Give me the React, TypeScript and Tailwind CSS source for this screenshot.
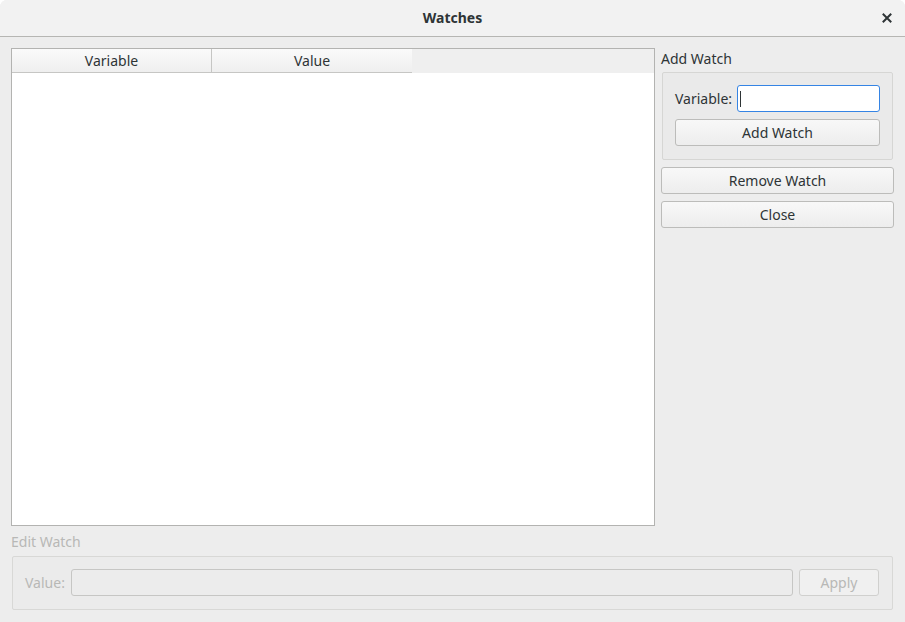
export default function App() {
  return (
    <div className="w-[905px] h-[622px] bg-white font-['Noto_Sans',sans-serif] text-[14px] text-[#2e3436]">
      <div className="w-full h-full flex flex-col rounded-t-[7px] overflow-hidden bg-[#ededed]">
        {/* title bar */}
        <div className="relative h-[37px] shrink-0 flex items-center justify-center bg-[#f2f2f2] border-b border-[#b6b6b3]">
          <span className="font-bold text-[14px] leading-none">Watches</span>
          <button className="absolute right-[12px] top-[12px] w-[12px] h-[12px] flex items-center justify-center">
            <svg width="10" height="10" viewBox="0 0 10 10">
              <path d="M1.5 1.5 L8.5 8.5 M8.5 1.5 L1.5 8.5" stroke="#2e3436" strokeWidth="2" strokeLinecap="square" />
            </svg>
          </button>
        </div>

        <div className="flex-1 flex flex-col px-[11px] pt-[11px] pb-[11px]">
          <div className="flex gap-[6px] h-[478px]">
            {/* table */}
            <div className="flex-1 border border-[#b3b3b1] bg-white flex flex-col">
              <div className="flex h-[24px] bg-[#efefef]">
                <div className="w-[200px] flex items-center justify-center bg-gradient-to-b from-[#fafafa] to-[#efefef] border-r border-b border-[#c6c6c4]">
                  Variable
                </div>
                <div className="w-[200px] flex items-center justify-center bg-gradient-to-b from-[#fafafa] to-[#efefef] border-b border-[#c6c6c4]">
                  Value
                </div>
                <div className="flex-1" />
              </div>
              <div className="flex-1" />
            </div>

            {/* right column */}
            <div className="w-[233px] flex flex-col">
              <div className="h-[21px] leading-[21px]">Add Watch</div>
              <div className="mt-[3px] ml-[1px] mr-[1px] border border-[#d6d6d4] bg-[#eaeaea] rounded-[2px] px-[12px] pt-[12px] pb-[13px] flex flex-col gap-[7px]">
                <div className="flex items-center gap-[5px]">
                  <span>Variable:</span>
                  <div className="flex-1 h-[27px] bg-white border border-[#3584e4] rounded-[3px] flex items-center pl-[2px]">
                    <span className="w-[1px] h-[16px] bg-[#2e3436]" />
                  </div>
                </div>
                <button className="h-[27px] border border-[#bcbcba] rounded-[3px] bg-gradient-to-b from-[#f8f8f8] to-[#ededed]">
                  Add Watch
                </button>
              </div>
              <button className="mt-[7px] h-[27px] border border-[#bcbcba] rounded-[3px] bg-gradient-to-b from-[#f8f8f8] to-[#ededed]">
                Remove Watch
              </button>
              <button className="mt-[7px] h-[27px] border border-[#bcbcba] rounded-[3px] bg-gradient-to-b from-[#f8f8f8] to-[#ededed]">
                Close
              </button>
            </div>
          </div>

          {/* edit watch */}
          <div className="mt-[6px] h-[20px] leading-[20px] text-[#b8b8b6]">Edit Watch</div>
          <div className="mt-[4px] ml-[1px] mr-[1px] border border-[#d8d8d6] bg-[#ebebeb] rounded-[2px] pl-[12px] pr-[13px] pt-[12px] pb-[13px] flex items-center gap-[6px] text-[#b8b8b6]">
            <span>Value:</span>
            <div className="flex-1 h-[27px] border border-[#c6c6c4] rounded-[3px] bg-[#ececec]" />
            <button className="w-[80px] h-[27px] border border-[#d0d0ce] rounded-[3px] bg-[#f0f0f0] text-[#b8b8b6]">
              Apply
            </button>
          </div>
        </div>
      </div>
    </div>
  );
}
